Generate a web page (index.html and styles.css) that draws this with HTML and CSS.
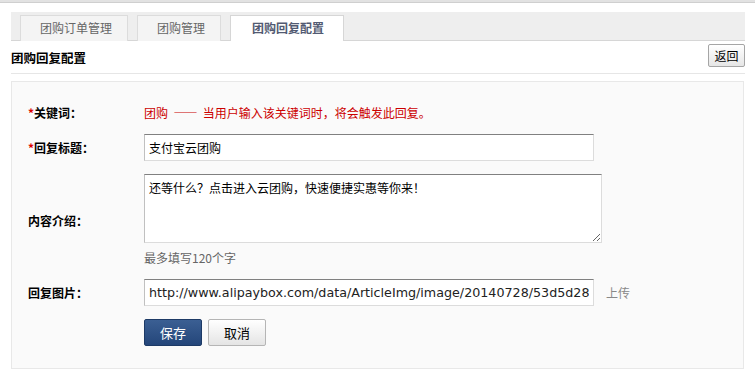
FILE: index.html
```html
<!DOCTYPE html>
<html lang="zh">
<head>
<meta charset="utf-8">
<title>团购回复配置</title>
<link rel="stylesheet" href="styles.css">
</head>
<body>
<div class="topbar"></div>
<div class="wrap">
  <div class="tabs">
    <div class="tab">团购订单管理</div>
    <div class="tab">团购管理</div>
    <div class="tab active">团购回复配置</div>
  </div>
  <div class="header">
    <h1 class="title">团购回复配置</h1>
    <button class="btn-back" type="button">返回</button>
  </div>
  <div class="panel">
    <div class="row row-key">
      <div class="label"><span class="req">*</span>关键词：</div>
      <div class="value keyword">团购&nbsp;&nbsp;<span class="dash">——</span>&nbsp;&nbsp;当用户输入该关键词时，将会触发此回复。</div>
    </div>
    <div class="row">
      <div class="label"><span class="req">*</span>回复标题：</div>
      <div class="value"><input class="text" type="text" value="支付宝云团购"></div>
    </div>
    <div class="row">
      <div class="label">内容介绍：</div>
      <div class="value">
        <textarea class="area">还等什么？点击进入云团购，快速便捷实惠等你来！</textarea>
        <div class="hint">最多填写120个字</div>
      </div>
    </div>
    <div class="row">
      <div class="label">回复图片：</div>
      <div class="value inline">
        <input class="text url" type="text" value="http://www.alipaybox.com/data/ArticleImg/image/20140728/53d5d28a9f1c2.jpg">
        <span class="upload">上传</span>
      </div>
    </div>
    <div class="row">
      <div class="label"></div>
      <div class="value inline buttons">
        <button class="btn-save" type="button">保存</button>
        <button class="btn-cancel" type="button">取消</button>
      </div>
    </div>
  </div>
</div>
</body>
</html>
```
FILE: styles.css
```css
* { box-sizing: border-box; }
html, body {
  margin: 0;
  padding: 0;
  background: #fff;
  font-family: "Noto Sans CJK SC", "DejaVu Sans", sans-serif;
  font-size: 12px;
  color: #000;
}
.topbar {
  height: 3px;
  background: #e2e2e2;
  border-bottom: 1px solid #cfcfcf;
}
.wrap {
  margin: 9px 10px 0 11px;
}
.tabs {
  display: flex;
  align-items: flex-end;
  gap: 9px;
  height: 29px;
  padding-left: 9px;
  background: #eeeeee;
  border-bottom: 1px solid #d6d6d6;
}
.tab {
  height: 26px;
  margin-bottom: -1px;
  padding: 0 15px 0 19px;
  line-height: 24px;
  color: #666;
  background: #f4f4f4;
  border: 1px solid #dcdcdc;
  border-bottom: none;
  white-space: nowrap;
}
.tab.active {
  background: #fff;
  color: #525a72;
  font-weight: bold;
  padding: 0 19px 0 21px;
  border-color: #d6d6d6;
}
.header {
  display: flex;
  align-items: center;
  justify-content: space-between;
  height: 33px;
  border-bottom: 1px solid #e6e6e6;
}
.title {
  margin: 0;
  font-size: 12.5px;
  font-weight: bold;
  color: #000;
}
.btn-back {
  width: 37px;
  height: 23px;
  padding: 0;
  margin-top: -4px;
  font-family: inherit;
  font-size: 12px;
  color: #000;
  background: linear-gradient(#ffffff, #e6e6e6);
  border: 1px solid #a5a5a5;
  border-radius: 2px;
}
.panel {
  margin-top: 7px;
  margin-right: 1px;
  padding: 21px 0 22px 16px;
  background: #fafafa;
  border: 1px solid #e8e8e8;
  display: flex;
  flex-direction: column;
  gap: 13px;
}
.row {
  display: flex;
  align-items: center;
}
.row-key {
  height: 18px;
}
.label {
  width: 116px;
  flex: none;
  font-weight: bold;
  color: #000;
}
.req {
  color: #d00;
  font-weight: bold;
}
.value {
  flex: 1;
}
.value.inline {
  display: flex;
  align-items: center;
}
.keyword {
  color: #c00;
}
.dash {
  letter-spacing: 0;
}
.text {
  display: block;
  width: 450px;
  height: 27px;
  padding: 0 4px;
  font-family: "Noto Sans CJK SC", "DejaVu Sans", sans-serif;
  font-size: 12px;
  color: #000;
  background: #fff;
  border: 1px solid #dcdcdc;
  border-top-color: #808080;
  border-left-color: #c0c0c0;
  outline: none;
}
.url {
  font-family: "DejaVu Sans", sans-serif;
  font-size: 12.7px;
  color: #222;
}
.area {
  display: block;
  width: 458px;
  height: 69px;
  padding: 4px;
  resize: both;
  font-family: "Noto Sans CJK SC", "DejaVu Sans", sans-serif;
  font-size: 12px;
  color: #000;
  background: #fff;
  border: 1px solid #dcdcdc;
  border-top-color: #808080;
  border-left-color: #c0c0c0;
  outline: none;
}
.hint {
  margin-top: 7px;
  line-height: 16px;
  color: #666;
}
.upload {
  margin-left: 12px;
  color: #888;
}
.buttons {
  gap: 6px;
}
.btn-save, .btn-cancel {
  width: 58px;
  height: 27px;
  padding: 0;
  font-family: inherit;
  font-size: 13px;
  border-radius: 2px;
}
.btn-save {
  color: #fff;
  background: linear-gradient(#3b5f93, #24467a);
  border: 1px solid #1d3a66;
}
.btn-cancel {
  color: #000;
  background: linear-gradient(#ffffff, #e4e4e4);
  border: 1px solid #b5b5b5;
}
```
